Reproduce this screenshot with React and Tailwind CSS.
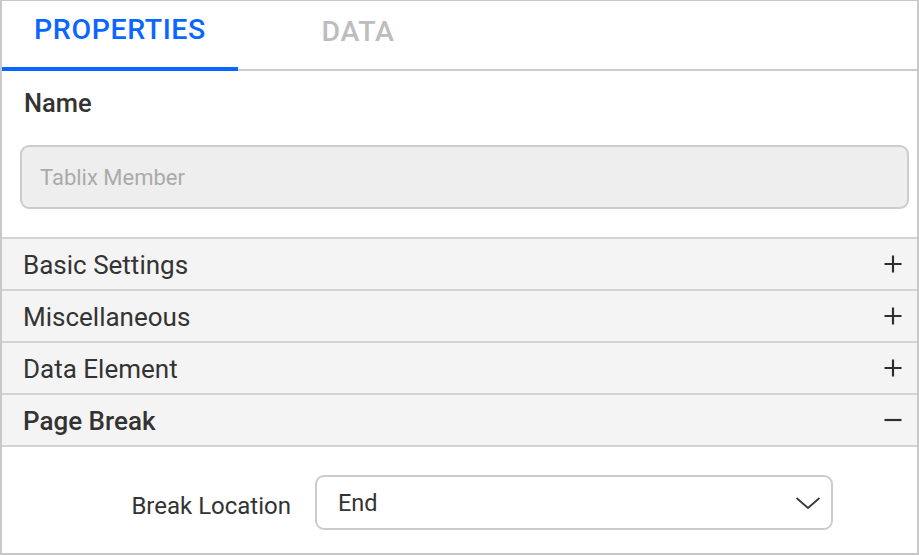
import React from 'react';

const Plus = () => (
  <svg width="18" height="18" viewBox="0 0 18 18" className="shrink-0">
    <path d="M9 0.5V17.5M0.5 9H17.5" stroke="#2e2e2e" strokeWidth="2.2" />
  </svg>
);

const Minus = () => (
  <svg width="18" height="18" viewBox="0 0 18 18" className="shrink-0">
    <path d="M0.5 9H17.5" stroke="#2e2e2e" strokeWidth="2.2" />
  </svg>
);

const Section = ({ title, open }) => (
  <div className="h-[52px] flex items-center justify-between bg-[#f4f4f4] border-b-2 border-[#d3d3d3] pl-[21px] pr-[15px]">
    <span className={open ? 'pt-[3px] text-[26px] font-medium text-[#333333]' : 'pt-[3px] text-[26px] text-[#333333]'}>{title}</span>
    {open ? <Minus /> : <Plus />}
  </div>
);

const App = () => {
  return (
    <div className="w-[919px] h-[555px] bg-white border-t border-x-2 border-b-2 border-[#c8c8c8] overflow-hidden flex flex-col" style={{ fontFamily: 'Roboto, "Liberation Sans", sans-serif' }}>
      {/* pestañas */}
      <div className="h-[70px] shrink-0 flex border-b-2 border-[#cccccc]">
        <div className="w-[236px] h-[70px] -mb-[2px] border-b-4 border-[#0a66ff] flex items-center justify-center pb-[8px]">
          <span className="text-[28.5px] font-medium tracking-[0.6px] text-[#0a66ff]">PROPERTIES</span>
        </div>
        <div className="w-[240px] flex items-center justify-center pb-[6px]">
          <span className="text-[28.5px] font-medium tracking-[0.6px] text-[#bdbdbd]">DATA</span>
        </div>
      </div>

      {/* nombre */}
      <div className="shrink-0 pt-[16px] pb-[28px] pl-[22px] pr-[8px] border-b-2 border-[#d3d3d3]">
        <div className="text-[25.5px] leading-[32px] font-medium text-[#333333]">Name</div>
        <div className="mt-[26px] h-[64px] rounded-[9px] border-2 border-[#cccccc] bg-[#eeeeee] flex items-center pl-[18px] -ml-[4px]">
          <span className="pt-[1px] text-[22px] text-[#aaaaaa]">Tablix Member</span>
        </div>
      </div>

      <Section title="Basic Settings" />
      <Section title="Miscellaneous" />
      <Section title="Data Element" />
      <Section title="Page Break" open />

      <div className="pt-[28px] flex items-center">
        <div className="w-[289px] pt-[7px] text-right text-[24px] text-[#333333]">Break Location</div>
        <div className="ml-[24px] w-[518px] h-[55px] rounded-[9px] border-2 border-[#cccccc] flex items-center justify-between pl-[21px] pr-[10px]">
          <span className="pt-[2px] text-[23.5px] text-[#333333]">End</span>
          <svg width="26" height="14" viewBox="0 0 26 14">
            <path d="M1.5 2L13 12L24.5 2" fill="none" stroke="#3a3a3a" strokeWidth="1.8" />
          </svg>
        </div>
      </div>
    </div>
  );
};

export default App;
